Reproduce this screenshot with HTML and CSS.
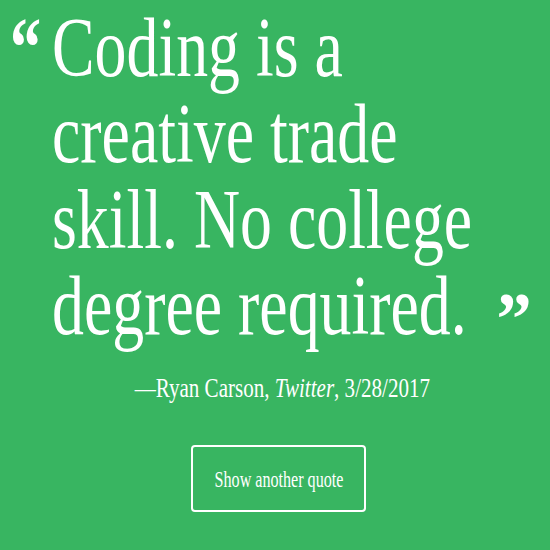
FILE: index.html
```html
<!DOCTYPE html>
<html lang="en">
<head>
<meta charset="utf-8">
<title>Quote</title>
<link rel="stylesheet" href="styles.css">
</head>
<body>
<main class="page">
  <blockquote class="quote">
    <span class="mark-open">“</span>
    <p class="lines">Coding is a<br>creative trade<br>skill. No college<br>degree required. <span class="mark-close">”</span></p>
  </blockquote>
  <p class="attribution"><span class="squeeze">—Ryan Carson, <cite>Twitter</cite>, 3/28/2017</span></p>
  <div class="actions">
    <button class="btn" type="button"><span class="btn-label">Show another quote</span></button>
  </div>
</main>
</body>
</html>
```

FILE: styles.css
```css
html, body {
  margin: 0;
  height: 100%;
  overflow: hidden;
  background: #38b561;
}

body {
  font-family: "Liberation Serif", "Times New Roman", serif;
  color: #fff;
}

.page {
  padding-top: 5px;
}

.quote {
  display: flex;
  margin: 0;
  padding-left: 10px;
  font-size: 84px;
  line-height: 86px;
}

.mark-open {
  display: block;
  flex: 0 0 41px;
  font-weight: 700;
  transform: scaleX(0.74);
  transform-origin: 0 0;
}

.lines {
  margin: 0;
  white-space: nowrap;
  transform: scaleX(0.76);
  transform-origin: 0 0;
}

.mark-close {
  display: inline-block;
  margin-left: 18px;
  font-size: 74px;
  line-height: 0;
  font-weight: 700;
  vertical-align: -10px;
  transform: scaleX(1.25);
  transform-origin: 0 0;
}

.attribution {
  margin: 23px 0 0;
  padding-left: 15px;
  text-align: center;
  font-size: 27px;
  line-height: 32px;
  white-space: nowrap;
}

.squeeze {
  display: inline-block;
  transform: scaleX(0.78);
}

.squeeze cite {
  font-style: italic;
}

.actions {
  display: flex;
  justify-content: center;
  padding-left: 7px;
  margin-top: 41px;
}

.btn {
  box-sizing: border-box;
  display: flex;
  align-items: center;
  justify-content: center;
  width: 175px;
  height: 67px;
  padding: 2px 0 0;
  border: 2px solid #fff;
  border-radius: 4px;
  background: transparent;
  color: #fff;
  font-family: "Liberation Serif", "Times New Roman", serif;
  font-size: 23px;
  white-space: nowrap;
}

.btn-label {
  display: inline-block;
  transform: scaleX(0.7);
}
```
